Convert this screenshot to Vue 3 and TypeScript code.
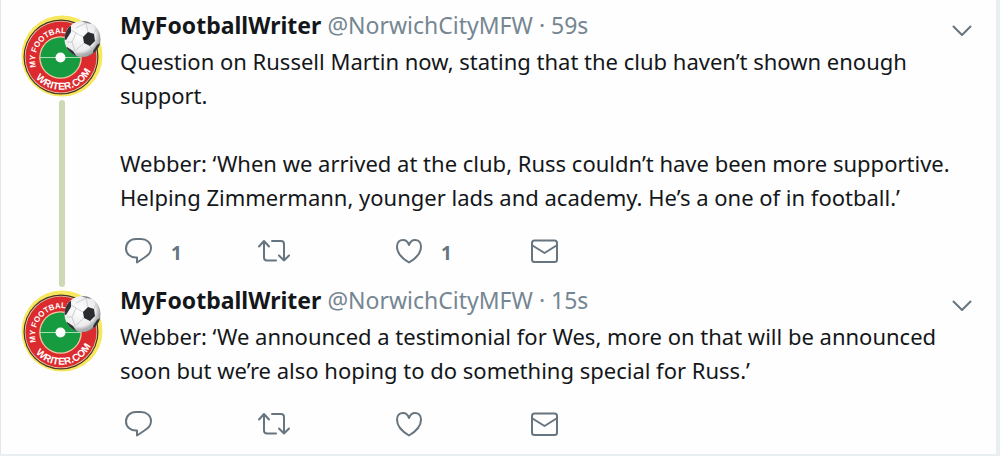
<script setup lang="ts">
interface Tweet {
  id: number
  name: string
  handle: string
  age: string
  paragraphs: string[]
  replies?: number
  likes?: number
}

const tweets: Tweet[] = [
  {
    id: 1,
    name: 'MyFootballWriter',
    handle: '@NorwichCityMFW',
    age: '59s',
    paragraphs: [
      'Question on Russell Martin now, stating that the club haven’t shown enough support.',
      'Webber: ‘When we arrived at the club, Russ couldn’t have been more supportive. Helping Zimmermann, younger lads and academy. He’s a one of in football.’',
    ],
    replies: 1,
    likes: 1,
  },
  {
    id: 2,
    name: 'MyFootballWriter',
    handle: '@NorwichCityMFW',
    age: '15s',
    paragraphs: [
      'Webber: ‘We announced a testimonial for Wes, more on that will be announced soon but we’re also hoping to do something special for Russ.’',
    ],
  },
]
</script>

<template>
  <main class="thread">
    <article v-for="(tweet, i) in tweets" :key="tweet.id" class="tweet">
      <div class="side">
        <svg class="avatar" viewBox="0 0 82 82" role="img" aria-label="My Football Writer .com">
          <defs>
            <path :id="`top-${tweet.id}`" d="M15 52A27 27 0 0 1 65.700 34" />
            <path :id="`bottom-${tweet.id}`" d="M10.500 56.500A33 33 0 0 0 72 50" />
            <radialGradient :id="`ball-${tweet.id}`" cx="0.4" cy="0.38" r="0.66">
              <stop offset="0" stop-color="#fff" />
              <stop offset="0.7" stop-color="#ececee" />
              <stop offset="1" stop-color="#77797b" />
            </radialGradient>
            <clipPath :id="`clip-${tweet.id}`"><circle cx="61.500" cy="24" r="18" /></clipPath>
          </defs>
          <circle cx="41" cy="41" r="40.500" fill="#f6e75c" />
          <circle cx="40" cy="42" r="37.500" fill="#453425" />
          <circle cx="40" cy="42" r="36.300" fill="#e8c9a5" />
          <circle cx="40" cy="42" r="35.500" fill="#dc2b2f" />
          <circle cx="39.500" cy="42.500" r="21.300" fill="#f1c7a4" />
          <circle cx="39.500" cy="42.500" r="20" fill="#169b40" />
          <path d="M19 42.500H60" stroke="#a9dfb8" stroke-width="1" />
          <circle cx="39.500" cy="42.500" r="5" fill="#fff" />
          <text class="ring">
            <textPath :href="`#top-${tweet.id}`">MY FOOTBALL</textPath>
          </text>
          <text class="ring lower">
            <textPath :href="`#bottom-${tweet.id}`" startOffset="51%" text-anchor="middle">WRITER.COM</textPath>
          </text>
          <circle cx="61.500" cy="24" r="18" :fill="`url(#ball-${tweet.id})`" />
          <g :clip-path="`url(#clip-${tweet.id})`">
            <path d="M62 22l5-5 6 2 1 7-5 5-6-3z" fill="#292b2f" />
            <path d="M42 24l3-12 5-1 0 6-5 8z M46 32l6 4 4 6-6 0-6-5z M72 36l4-6 5-3-2 9-6 4z" fill="#303237" />
            <path d="M60 6l6-1 5 4-6-1z" fill="#85888b" />
            <path d="M62 22l-7-4-5-3 M55 18l-4 9-5 0 M51 27l3 9 M54 36l9-8 M69 31l3 5 M56 41l9 0 7-5 M74 26l4 2 M73 19l2-5 M67 17l-2-9 M65 8l-10 5" fill="none" stroke="#c2c4c6" stroke-width="0.8" />
          </g>
        </svg>
        <div v-if="i < tweets.length - 1" class="connector"></div>
      </div>

      <div class="content">
        <header class="head">
          <p class="byline">
            <strong class="name">{{ tweet.name }}</strong>
            <span class="meta">{{ tweet.handle }} · {{ tweet.age }}</span>
          </p>
          <button class="more" type="button" aria-label="More">
            <svg width="20" height="12" viewBox="0 0 20 12"><path d="M1.500 1.500L10 10L18.500 1.500" /></svg>
          </button>
        </header>

        <div class="body">
          <p v-for="text in tweet.paragraphs" :key="text">{{ text }}</p>
        </div>

        <div class="actions">
          <button type="button" aria-label="Reply">
            <svg width="36" height="30" viewBox="0 0 36 30">
              <path d="M15 3H20C26 3 30 7 30 12C30 17 27 19 23.500 21.500L16 26.500V21.500C9 22 5 17.500 5 12.500C5 7 9 3 15 3Z" />
            </svg>
            <span v-if="tweet.replies" class="count">{{ tweet.replies }}</span>
          </button>
          <button type="button" aria-label="Retweet">
            <svg width="36" height="30" viewBox="0 0 36 30">
              <path d="M3 10.500L8 5L13 10.500M8 5.500V21.500Q8 24.500 11 24.500H20M16 5H25Q28 5 28 8V24.500M23 19.500L28 24.500L33 19.500" />
            </svg>
          </button>
          <button type="button" aria-label="Like">
            <svg width="36" height="30" viewBox="0 0 36 30">
              <path d="M18 26.500C12 23 6 17 6 10.500C6 6.500 8.500 4 12 4C14.500 4 17 6 18 9C19 6 21.500 4 24 4C27.500 4 30 6.500 30 10.500C30 17 24 23 18 26.500Z" />
            </svg>
            <span v-if="tweet.likes" class="count">{{ tweet.likes }}</span>
          </button>
          <button type="button" aria-label="Direct message">
            <svg width="36" height="30" viewBox="0 0 36 30">
              <rect x="6" y="4.500" width="25" height="21.500" rx="2.500" />
              <path d="M6.500 9.500L18.500 17L30.500 9.500" />
            </svg>
          </button>
        </div>
      </div>
    </article>
  </main>
</template>

<style>
body {
  margin: 0;
  background: #e9eef1;
}
</style>

<style scoped>
.thread {
  margin-right: 4px;
  padding-bottom: 6px;
  border-left: 1px solid #e1e8ed;
  background: #fefefe;
  color: #14171a;
  font-family: "Noto Sans", "Open Sans", sans-serif;
  font-size: 22px;
  line-height: 34px;
}

p {
  margin: 0;
}

.tweet {
  display: flex;
}

.side {
  display: flex;
  flex: none;
  flex-direction: column;
  align-items: center;
  gap: 3px;
  width: 119px;
  padding-top: 15px;
  margin-bottom: -12px;
}

.avatar {
  width: 82px;
  height: 82px;
  margin-left: 3px;
}

.connector {
  flex: 1;
  width: 6px;
  margin-left: 3px;
  border-radius: 3px;
  background: #cfd8b4;
}

.ring {
  fill: #fff;
  font-family: "Liberation Sans", Arial, sans-serif;
  font-size: 8px;
  font-weight: 700;
  text-rendering: geometricPrecision;
}

.lower {
  font-size: 10px;
}

.content {
  flex: 1;
  min-width: 0;
  padding: 8px 24px 9px 0;
}

.head {
  display: flex;
  align-items: center;
  justify-content: space-between;
  margin-bottom: 2px;
  font-size: 23px;
}

.byline {
  display: flex;
  gap: 6px;
}

.name {
  font-weight: 700;
}

.meta {
  color: #758692;
}

button {
  padding: 0;
  border: 0;
  background: none;
  color: #66757f;
  cursor: pointer;
}

button svg {
  display: block;
  fill: none;
  stroke: currentColor;
  stroke-width: 2;
  stroke-linecap: round;
  stroke-linejoin: round;
}

.more {
  padding-top: 12px;
}

.body p + p {
  margin-top: 34px;
}

.actions {
  display: grid;
  grid-template-columns: repeat(4, 135px);
  margin-top: 22px;
  padding-left: 1px;
}

.actions button {
  display: flex;
  align-items: center;
  gap: 14px;
  height: 30px;
  font-family: inherit;
  font-size: 19px;
  font-weight: 700;
}

.count {
  padding-top: 3px;
}
</style>
